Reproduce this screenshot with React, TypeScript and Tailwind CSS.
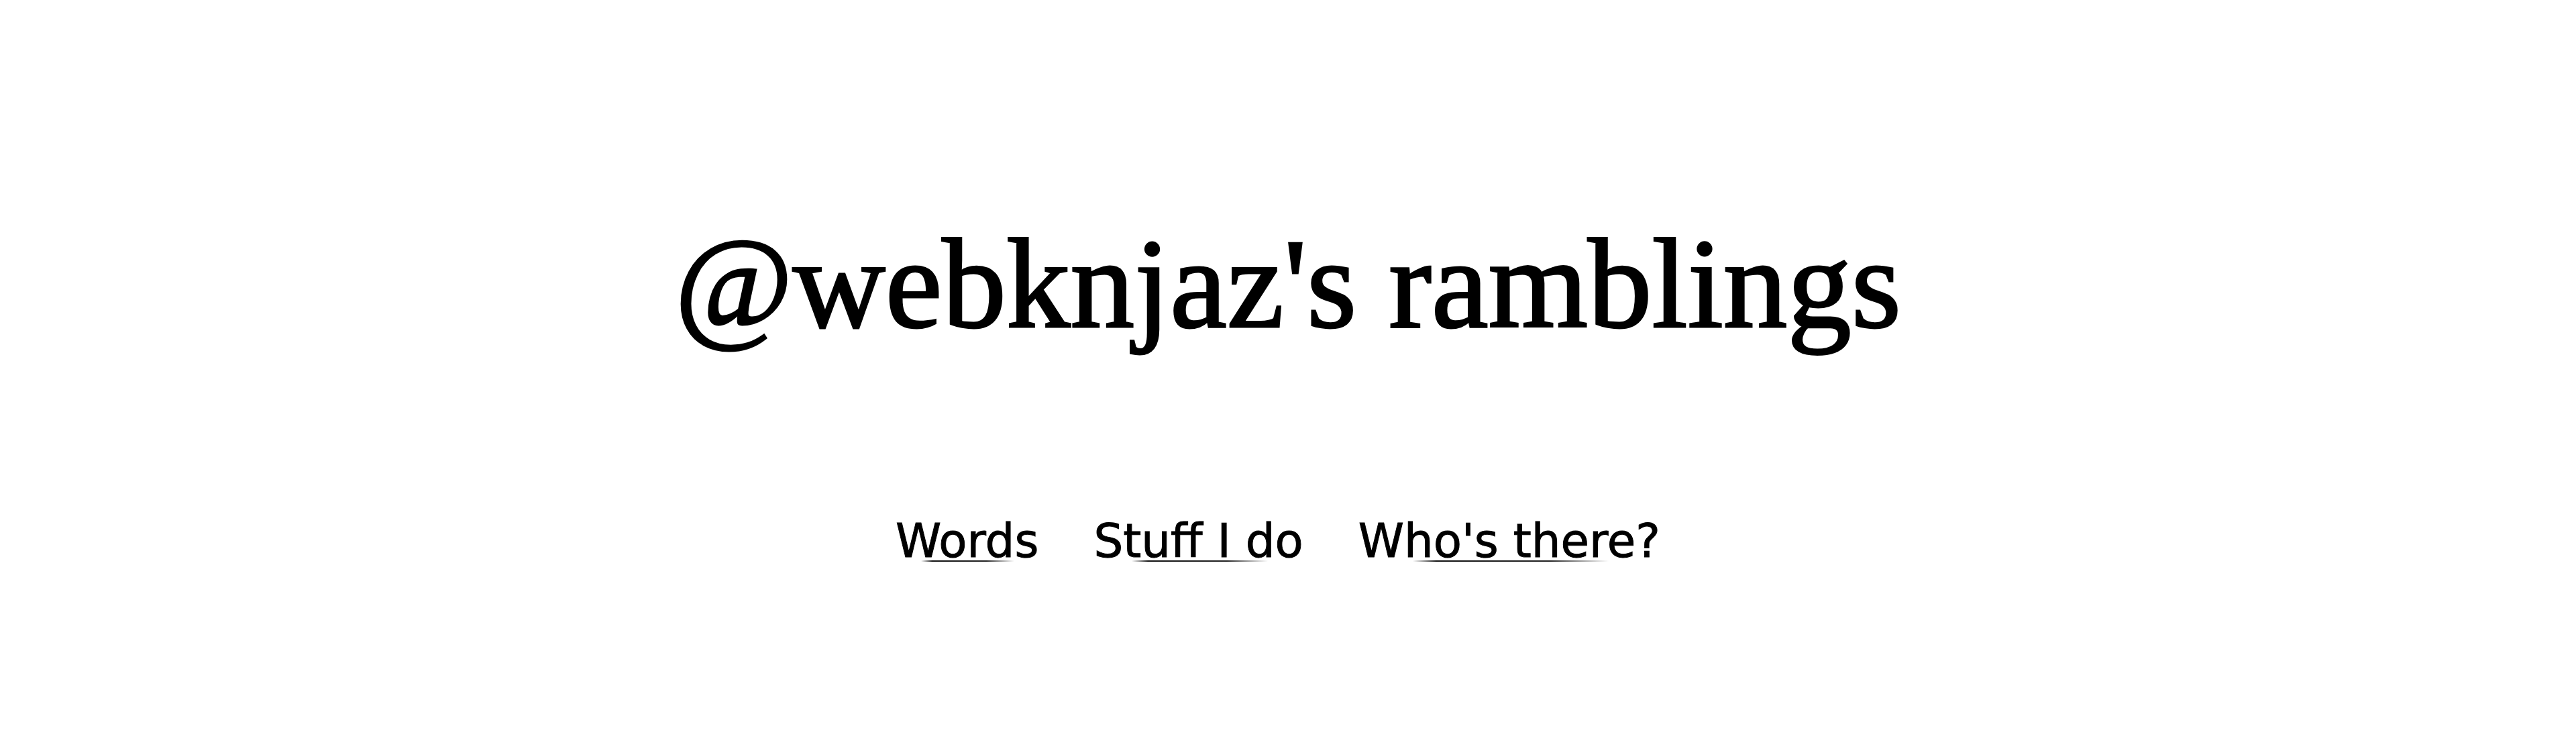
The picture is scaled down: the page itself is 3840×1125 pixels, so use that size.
export default function App() {
  const links = ["Words", "Stuff I do", "Who's there?"];

  return (
    <div className="min-h-screen w-full bg-white text-black">
      <header className="flex flex-col items-center pt-[327px]">
        <h1 className="text-[191px] leading-none font-normal font-['Liberation_Serif',serif] whitespace-nowrap [-webkit-text-stroke:3px_black]">
          @webknjaz's ramblings
        </h1>
        <nav className="mt-[254px] pr-[30px]">
          <ul className="flex items-start gap-[82px] text-[69px] leading-none font-['DejaVu_Sans',sans-serif] [-webkit-text-stroke:1px_black]">
            {links.map((label) => (
              <li key={label} className="relative pb-[12px]">
                <a href="#" className="whitespace-nowrap">
                  {label}
                </a>
                {/* underline fades out at both ends */}
                <span className="absolute left-[18%] right-[17%] top-[63px] h-[2px] bg-[linear-gradient(to_right,transparent,#111_12%,#222_70%,transparent)]" />
              </li>
            ))}
          </ul>
        </nav>
      </header>
    </div>
  );
}
